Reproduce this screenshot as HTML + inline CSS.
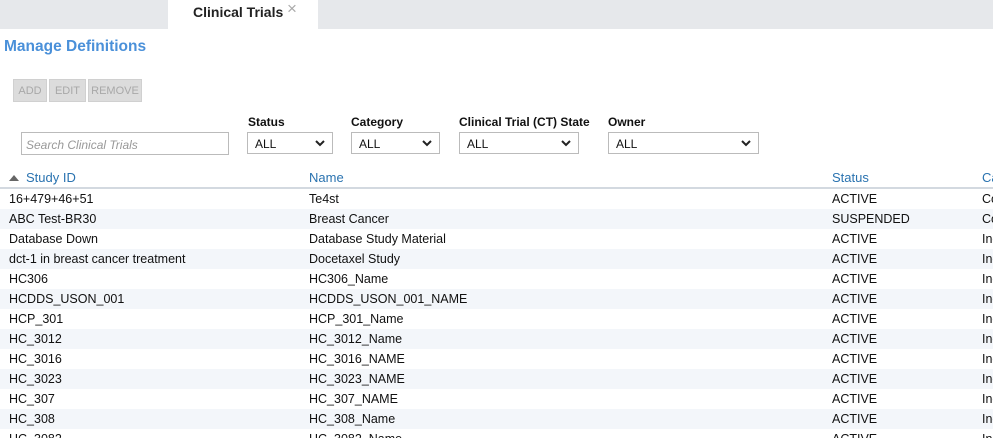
<!DOCTYPE html>
<html><head><meta charset="utf-8"><style>
*{box-sizing:border-box;margin:0;padding:0}
html,body{width:993px;height:438px;overflow:hidden}
body{background:#fff;font-family:"Liberation Sans",Arial,sans-serif;position:relative;color:#111}
.tabbar{position:absolute;left:0;top:0;width:993px;height:29px;background:#e6e8eb}
.tab{position:absolute;left:168px;top:0;width:150px;height:29px;background:#fff}
.tab b{position:absolute;left:25px;top:4px;font-size:14px;color:#222}
.tab span{position:absolute;left:119px;top:-1px;font-size:17px;color:#aaa}
h1{position:absolute;left:4px;top:38px;font-size:15.5px;color:#4a90d9;font-weight:bold}
.btn{position:absolute;top:79px;height:23px;background:#dcdcdc;border:1px solid #d0d0d0;color:#a8a8a8;font-size:11px;line-height:22px;text-align:center}
.search{position:absolute;left:21px;top:132px;width:208px;height:23px;border:1px solid #bbb;font-size:12px;font-style:italic;color:#999;padding:5px 4px}
.lbl{position:absolute;top:115px;font-size:12px;font-weight:bold;color:#111}
.sel{position:absolute;top:132px;height:22px;border:1px solid #bbb;font-size:12px;padding:4px 7px;color:#111}
.sel svg{position:absolute;right:7px;top:7px}
.thr{position:absolute;left:0;top:170px;width:993px;height:17px;overflow:hidden}
.th{position:absolute;top:0;font-size:13px;color:#2a73b0;white-space:nowrap}
.hline{position:absolute;left:0;top:187px;width:993px;height:2px;background:#d3d9e0}
.row{position:absolute;left:0;width:993px;height:20px;font-size:12.5px;line-height:20px;overflow:hidden}
.row.alt{background:#f3f6fa}
.row span{position:absolute;white-space:nowrap}
</style></head><body>
<div class="tabbar"><div class="tab"><b>Clinical Trials</b><span>×</span></div></div>
<h1>Manage Definitions</h1>
<div class="btn" style="left:13px;width:34px">ADD</div>
<div class="btn" style="left:49px;width:37px">EDIT</div>
<div class="btn" style="left:88px;width:54px">REMOVE</div>
<div class="search">Search Clinical Trials</div>
<div class="lbl" style="left:248px">Status</div>
<div class="lbl" style="left:351px">Category</div>
<div class="lbl" style="left:459px">Clinical Trial (CT) State</div>
<div class="lbl" style="left:608px">Owner</div>
<div class="sel" style="left:247px;width:86px">ALL<svg width="10" height="7" viewBox="0 0 10 7"><path d="M1 1l4 4 4-4" stroke="#222" stroke-width="2" fill="none"/></svg></div>
<div class="sel" style="left:351px;width:89px">ALL<svg width="10" height="7" viewBox="0 0 10 7"><path d="M1 1l4 4 4-4" stroke="#222" stroke-width="2" fill="none"/></svg></div>
<div class="sel" style="left:459px;width:120px">ALL<svg width="10" height="7" viewBox="0 0 10 7"><path d="M1 1l4 4 4-4" stroke="#222" stroke-width="2" fill="none"/></svg></div>
<div class="sel" style="left:608px;width:151px">ALL<svg width="10" height="7" viewBox="0 0 10 7"><path d="M1 1l4 4 4-4" stroke="#222" stroke-width="2" fill="none"/></svg></div>
<div class="thr">
<svg style="position:absolute;left:9px;top:4px" width="10" height="7"><path d="M0 7L5 1L10 7Z" fill="#666"/></svg>
<div class="th" style="left:26px">Study ID</div>
<div class="th" style="left:309px">Name</div>
<div class="th" style="left:832px">Status</div>
<div class="th" style="left:982px">Category</div>
</div>
<div class="hline"></div>
<div class="row" style="top:189px"><span style="left:9px">16+479+46+51</span><span style="left:309px">Te4st</span><span style="left:832px">ACTIVE</span><span style="left:982px">Commercial</span></div>
<div class="row alt" style="top:209px"><span style="left:9px">ABC Test-BR30</span><span style="left:309px">Breast Cancer</span><span style="left:832px">SUSPENDED</span><span style="left:982px">Commercial</span></div>
<div class="row" style="top:229px"><span style="left:9px">Database Down</span><span style="left:309px">Database Study Material</span><span style="left:832px">ACTIVE</span><span style="left:982px">Indication</span></div>
<div class="row alt" style="top:249px"><span style="left:9px">dct-1 in breast cancer treatment</span><span style="left:309px">Docetaxel Study</span><span style="left:832px">ACTIVE</span><span style="left:982px">Indication</span></div>
<div class="row" style="top:269px"><span style="left:9px">HC306</span><span style="left:309px">HC306_Name</span><span style="left:832px">ACTIVE</span><span style="left:982px">Indication</span></div>
<div class="row alt" style="top:289px"><span style="left:9px">HCDDS_USON_001</span><span style="left:309px">HCDDS_USON_001_NAME</span><span style="left:832px">ACTIVE</span><span style="left:982px">Indication</span></div>
<div class="row" style="top:309px"><span style="left:9px">HCP_301</span><span style="left:309px">HCP_301_Name</span><span style="left:832px">ACTIVE</span><span style="left:982px">Indication</span></div>
<div class="row alt" style="top:329px"><span style="left:9px">HC_3012</span><span style="left:309px">HC_3012_Name</span><span style="left:832px">ACTIVE</span><span style="left:982px">Indication</span></div>
<div class="row" style="top:349px"><span style="left:9px">HC_3016</span><span style="left:309px">HC_3016_NAME</span><span style="left:832px">ACTIVE</span><span style="left:982px">Indication</span></div>
<div class="row alt" style="top:369px"><span style="left:9px">HC_3023</span><span style="left:309px">HC_3023_NAME</span><span style="left:832px">ACTIVE</span><span style="left:982px">Indication</span></div>
<div class="row" style="top:389px"><span style="left:9px">HC_307</span><span style="left:309px">HC_307_NAME</span><span style="left:832px">ACTIVE</span><span style="left:982px">Indication</span></div>
<div class="row alt" style="top:409px"><span style="left:9px">HC_308</span><span style="left:309px">HC_308_Name</span><span style="left:832px">ACTIVE</span><span style="left:982px">Indication</span></div>
<div class="row" style="top:429px"><span style="left:9px">HC_3082</span><span style="left:309px">HC_3082_Name</span><span style="left:832px">ACTIVE</span><span style="left:982px">Indication</span></div>
</body></html>
